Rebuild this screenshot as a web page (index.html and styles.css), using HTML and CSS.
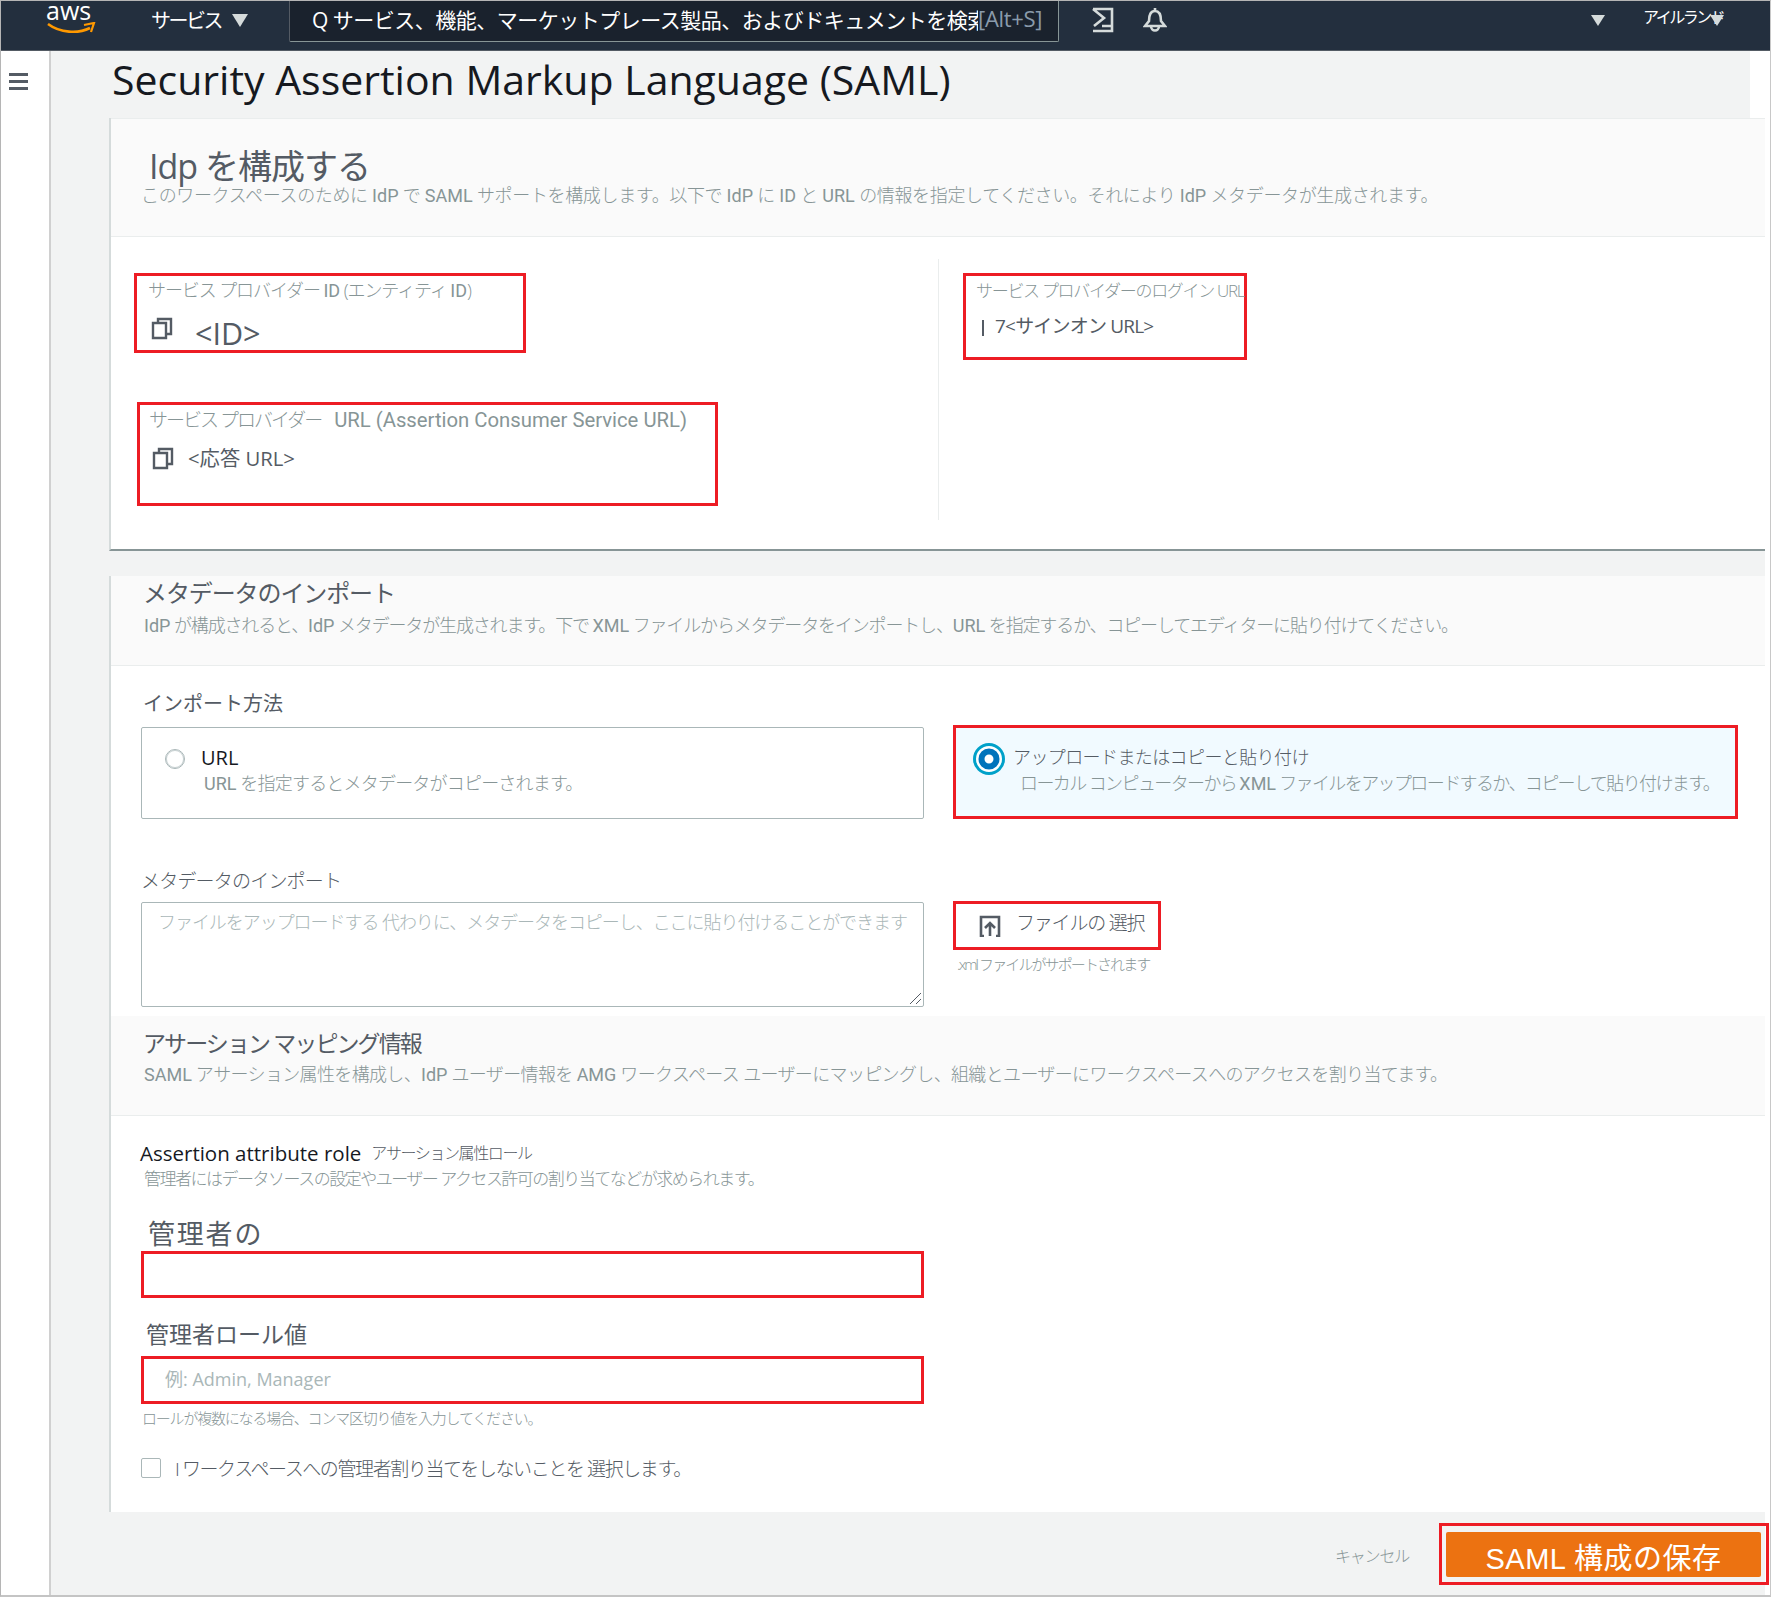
FILE: index.html
```html
<!DOCTYPE html>
<html lang="ja">
<head>
<meta charset="utf-8">
<title>SAML</title>
<link rel="stylesheet" href="styles.css">
</head>
<body>
<div class="page">
  <header class="topbar">
    <div class="logo">
      <span class="logo-text">aws</span>
      <svg class="logo-smile" width="50" height="14" viewBox="0 0 50 14"><path d="M2 2 C14 11 32 12 44 6" fill="none" stroke="#f90" stroke-width="2.6"/><path d="M38 3 L48 1 L45 10" fill="none" stroke="#f90" stroke-width="2.2"/></svg>
    </div>
    <span class="services">サービス</span>
    <span class="tri tri-services"></span>
    <div class="search"><span class="search-text">Q サービス、機能、マーケットプレース製品、およびドキュメントを検索</span><span class="search-key">[Alt+S]</span></div>
    <svg class="ico-term" width="24" height="26" viewBox="0 0 24 26"><path d="M2 2 H21 V24 H2 M2 2 L13 11 L3 19 M11 19 H21" fill="none" stroke="#d5dbdb" stroke-width="2.6"/></svg>
    <svg class="ico-bell" width="24" height="26" viewBox="0 0 24 26"><path d="M12 1 V4 M6 14 C6 7 8 4 12 4 C16 4 18 7 18 14 L22 19 H2 L6 14 Z M8 19 C8 25 16 25 16 19" fill="none" stroke="#d5dbdb" stroke-width="2.6"/></svg>
    <span class="tri tri-user"></span>
    <span class="region">アイルランド</span>
    <span class="tri tri-region"></span>
  </header>
  <div class="layout">
    <aside class="side"><div class="burger"><i></i><i></i><i></i></div></aside>
    <main class="main">
      <div class="title-band"><h1 class="page-title">Security Assertion Markup Language (SAML)</h1></div>

      <section class="card card-idp">
        <div class="head head-idp">
          <h2 class="h-idp">Idp を構成する</h2>
          <p class="sub sub-idp">このワークスペースのために <span class="lat">IdP</span> で <span class="lat">SAML</span> サポートを構成します。以下で <span class="lat">IdP</span> に <span class="lat">ID</span> と <span class="lat">URL</span> の情報を指定してください。それにより <span class="lat">IdP</span> メタデータが生成されます。</p>
        </div>
        <div class="idp-body">
          <div class="idp-left">
            <div class="red box-id">
              <div class="lbl">サービス プロバイダー <span class="lat">ID</span> (エンティティ <span class="lat">ID</span>)</div>
              <div class="val-row"><svg class="copy" width="22" height="23" viewBox="0 0 22 23"><path d="M7 5 V2 H20 V17 H15 M2 6 H15 V21 H2 Z" fill="none" stroke="#545b64" stroke-width="2.4"/></svg><span class="val-id">&lt;ID&gt;</span></div>
            </div>
            <div class="red box-url">
              <div class="lbl lbl-wide">サービス プロバイダー <span class="lat lat-wide">URL (Assertion Consumer Service URL)</span></div>
              <div class="val-row val-row2"><svg class="copy" width="22" height="23" viewBox="0 0 22 23"><path d="M7 5 V2 H20 V17 H15 M2 6 H15 V21 H2 Z" fill="none" stroke="#545b64" stroke-width="2.4"/></svg><span class="val-url">&lt;応答 URL&gt;</span></div>
            </div>
          </div>
          <div class="idp-right">
            <div class="red box-login">
              <div class="lbl lbl-small">サービス プロバイダーのログイン URL</div>
              <div class="val-row val-row3"><i class="cursor"></i><span class="val-login">7&lt;サインオン URL&gt;</span></div>
            </div>
          </div>
        </div>
      </section>

      <section class="card card-meta">
        <div class="head head-meta">
          <h2 class="h-meta">メタデータのインポート</h2>
          <p class="sub sub-meta"><span class="lat">IdP</span> が構成されると、<span class="lat">IdP</span> メタデータが生成されます。下で <span class="lat">XML</span> ファイルからメタデータをインポートし、<span class="lat">URL</span> を指定するか、コピーしてエディターに貼り付けてください。</p>
        </div>
        <div class="meta-body">
          <div class="lbl-method">インポート方法</div>
          <div class="options">
            <div class="option opt-url">
              <span class="radio"></span>
              <div class="opt-text">
                <div class="opt-title">URL</div>
                <div class="opt-desc"><span class="lat">URL</span> を指定するとメタデータがコピーされます。</div>
              </div>
            </div>
            <div class="option opt-upload">
              <svg class="radio-on" width="34" height="34" viewBox="0 0 34 34"><circle cx="17" cy="17" r="14.5" fill="#fff" stroke="#00a1c9" stroke-width="3"/><circle cx="17" cy="17" r="7.5" fill="none" stroke="#0073bb" stroke-width="6"/></svg>
              <div class="opt-text">
                <div class="opt-title opt-title-up">アップロードまたはコピーと貼り付け</div>
                <div class="opt-desc opt-desc-up">ローカル コンピューターから <span class="lat">XML</span> ファイルをアップロードするか、コピーして貼り付けます。</div>
              </div>
            </div>
          </div>
          <div class="import-row">
            <div class="import-left">
              <div class="lbl-import">メタデータのインポート</div>
              <div class="textarea"><span class="ph">ファイルをアップロードする 代わりに、メタデータをコピーし、ここに貼り付けることができます</span>
                <svg class="grip" width="14" height="14" viewBox="0 0 14 14"><path d="M2 13 L13 2 M8 13 L13 8" stroke="#545b64" stroke-width="1"/></svg>
              </div>
            </div>
            <div class="import-right">
              <div class="red file-btn">
                <svg width="22" height="22" viewBox="0 0 22 22"><path d="M5 21 H2 V2 H20 V21 H17 M11 21 V9 M6 13 L11 8 L16 13" fill="none" stroke="#545b64" stroke-width="2.6"/></svg>
                <span class="file-text">ファイルの 選択</span>
              </div>
              <div class="file-hint">.xml ファイルがサポートされます</div>
            </div>
          </div>
        </div>
        <div class="head head-map">
          <h2 class="h-map">アサーション マッピング情報</h2>
          <p class="sub sub-map"><span class="lat">SAML</span> アサーション属性を構成し、<span class="lat">IdP</span> ユーザー情報を <span class="lat">AMG</span> ワークスペース ユーザーにマッピングし、組織とユーザーにワークスペースへのアクセスを割り当てます。</p>
        </div>
        <div class="map-body">
          <div class="attr-row"><span class="attr-en">Assertion attribute role</span><span class="attr-ja">アサーション属性ロール</span></div>
          <div class="attr-desc">管理者にはデータソースの設定やユーザー アクセス許可の割り当てなどが求められます。</div>
          <div class="lbl-admin">管理者の</div>
          <div class="red field"></div>
          <div class="lbl-value">管理者ロール値</div>
          <div class="red field field-ph"><span class="ph-admin">例: Admin, Manager</span></div>
          <div class="help">ロールが複数になる場合、コンマ区切り値を入力してください。</div>
          <div class="check-row"><span class="check"></span><span class="check-text">I ワークスペースへの管理者割り当てをしないことを 選択します。</span></div>
        </div>
      </section>

      <footer class="footer">
        <span class="cancel">キャンセル</span>
        <div class="red save-wrap"><div class="save">SAML 構成の保存</div></div>
      </footer>
    </main>
  </div>
</div>
</body>
</html>
```

FILE: styles.css
```css
* { box-sizing: border-box; }
html, body { margin: 0; padding: 0; background: #fff; }
body { font-family: "Open Sans", "Noto Sans CJK JP", sans-serif; color: #16191f; }
h1, h2, p { margin: 0; font-weight: 400; }
.page { width: 1771px; height: 1597px; overflow: hidden; border-top: 1px solid #b5b5b5; border-left: 1px solid #b5b5b5; border-right: 1px solid #c8c8c8; border-bottom: 2px solid #c4c4c4; background: #fff; }
.lat { font-family: "Roboto", "Noto Sans CJK JP", sans-serif; font-weight: 400; letter-spacing: 0; }

/* top bar */
.topbar { height: 50px; background: #232f3e; border-bottom: 1px solid #545b64; display: flex; align-items: flex-start; color: #fff; }
.logo { width: 103px; height: 40px; padding-left: 45px; flex: none; }
.logo-text { display: block; font-size: 25px; line-height: 18px; color: #fff; }
.logo-smile { display: block; margin-top: 3px; }
.services { font-size: 20px; letter-spacing: -2.5px; line-height: 40px; margin-left: 47px; width: 81px; flex: none; color: #fff; white-space: nowrap; }
.tri { width: 0; height: 0; border-left: 8px solid transparent; border-right: 8px solid transparent; border-top: 13px solid #d5dbdb; flex: none; }
.tri-services { margin-top: 13px; }
.search { width: 770px; height: 41px; margin-left: 41px; background: #1a222d; border-right: 1px solid #879596; border-bottom: 1px solid #879596; border-left: 1px solid #545b64; border-radius: 0 0 2px 2px; display: flex; padding-left: 22px; flex: none; overflow: hidden; }
.search-text { width: 666px; flex: none; font-size: 21px; letter-spacing: -0.5px; line-height: 38px; white-space: nowrap; overflow: hidden; color: #fff; }
.search-key { font-size: 22px; letter-spacing: -0.3px; line-height: 34px; color: #8a9bab; white-space: nowrap; }
.ico-term { margin: 6px 0 0 32px; flex: none; }
.ico-bell { margin: 6px 0 0 28px; flex: none; }
.tri-user { margin: 14px 0 0 424px; border-left-width: 7px; border-right-width: 7px; border-top-width: 11px; }
.region { font-size: 16px; letter-spacing: -2.5px; line-height: 32px; margin-left: 38px; width: 67px; white-space: nowrap; flex: none; }
.tri-region { margin: 14px 0 0 0; border-left-width: 7px; border-right-width: 7px; border-top-width: 11px; }

/* layout */
.layout { display: flex; height: 1544px; }
.side { width: 50px; flex: none; background: #fff; border-right: 2px solid #d0d0d0; padding: 22px 0 0 8px; }
.burger i { display: block; width: 19px; height: 3px; background: #545b64; margin-bottom: 4px; }
.main { width: 1714px; flex: none; background: #f2f3f3; padding-left: 59px; }
.title-band { height: 67px; margin-left: -59px; padding-left: 59px; border-right: 15px solid #fff; }
.page-title { font-size: 41px; line-height: 56px; color: #16191f; white-space: nowrap; margin-left: 2px; }

/* cards */
.card { background: #fff; border-left: 2px solid #d5dbdb; margin-left: -1px; }
.card-idp { height: 433px; border-bottom: 2px solid #879596; }
.head { background: #fafafa; border-bottom: 1px solid #eaeded; }
.head-idp { height: 119px; padding: 27px 0 0 15px; border-top: 1px solid #eaeded; }
.h-idp { font-size: 34px; letter-spacing: -1px; line-height: 40px; color: #545b64; padding-left: 23px; }
.sub { font-size: 18px; line-height: 26px; color: #879596; white-space: nowrap; font-weight: 300; }
.sub-idp { margin-top: -4px; padding-left: 15px; letter-spacing: -0.35px; }

.idp-body { display: flex; height: 312px; }
.idp-left { width: 828px; padding: 14px 0 0 23px; border-right: 1px solid #eaeded; height: 261px; margin-top: 22px; }
.idp-right { padding: 14px 0 0 24px; margin-top: 22px; }
.red { border: 3px solid #ed1c24; }
.box-id { width: 392px; height: 80px; padding: 1px 0 0 11px; }
.box-url { width: 581px; height: 104px; margin: 49px 0 0 3px; padding: 2px 0 0 9px; }
.box-login { width: 284px; height: 87px; padding: 2px 0 0 10px; }
.lbl { font-size: 18px; letter-spacing: -1.1px; line-height: 26px; color: #879596; white-space: nowrap; font-weight: 300; }
.lbl-wide { letter-spacing: -2px; font-size: 19px; }
.lat-wide { font-size: 20.3px; margin-left: 10px; }
.lbl-small { font-size: 17px; letter-spacing: -1.3px; }
.val-row { display: flex; align-items: flex-start; margin-top: 10px; }
.val-id { font-size: 30.5px; line-height: 34px; color: #545b64; margin: 2px 0 0 22px; }
.val-url { font-size: 20.3px; line-height: 30px; color: #545b64; margin-left: 14px; }
.val-login { font-size: 19px; letter-spacing: -0.8px; line-height: 30px; color: #545b64; }
.val-row2 { margin-top: 11px; }
.val-row2 .val-url { margin-top: -1px; }
.val-row3 { margin-top: 7px; padding-left: 3px; }
.cursor { display: block; width: 2px; height: 16px; background: #545b64; margin: 9px 11px 0 3px; }
.copy { flex: none; margin: 3px 0 0 3px; }

/* metadata */
.card-meta { margin-top: 25px; height: 936px; }
.head-meta { height: 90px; padding: 0 0 0 32px; }
.h-meta { font-size: 24px; letter-spacing: -1.1px; line-height: 34px; color: #545b64; }
.sub-meta { margin-top: 2px; padding-left: 1px; letter-spacing: -1.15px; }
.meta-body { height: 350px; padding: 23px 0 0 30px; }
.lbl-method { font-size: 20px; line-height: 30px; color: #545b64; padding-left: 2px; }
.options { display: flex; margin-top: 8px; }
.option { display: flex; height: 92px; }
.opt-url { width: 783px; border: 1px solid #aab7b8; border-radius: 2px; padding: 17px 0 0 23px; }
.radio { width: 20px; height: 20px; border: 1px solid #aab7b8; border-radius: 50%; margin: 4px 16px 0 0; flex: none; background: #fff; box-shadow: inset 0 0 0 1px #c9d2d3; }
.opt-upload { width: 785px; height: 94px; margin-left: 29px; margin-top: -2px; border: 3px solid #ed1c24; background: #f1faff; padding: 14px 0 0 16px; }
.radio-on { flex: none; margin-right: 7px; }
.opt-upload .opt-text { padding-top: 3px; }
.opt-title { font-size: 20px; line-height: 25px; color: #16191f; }
.opt-title-up { color: #545b64; font-weight: 300; font-size: 18px; letter-spacing: -0.6px; }
.opt-desc { font-size: 18px; letter-spacing: -0.8px; line-height: 26px; color: #879596; font-weight: 300; white-space: nowrap; padding-left: 3px; }
.opt-desc-up { padding-left: 7px; letter-spacing: -1.6px; }
.import-row { display: flex; margin-top: 48px; }
.import-left { width: 783px; flex: none; }
.lbl-import { font-size: 19px; line-height: 28px; letter-spacing: -0.8px; color: #545b64; font-weight: 300; }
.textarea { height: 105px; margin-top: 7px; border: 1px solid #aab7b8; border-radius: 2px; padding: 5px 0 0 16px; position: relative; }
.ph { font-size: 18px; letter-spacing: -1.05px; line-height: 28px; color: #aab7b8; font-weight: 300; white-space: nowrap; }
.grip { position: absolute; right: 1px; bottom: 1px; }
.import-right { margin: 34px 0 0 29px; }
.file-btn { width: 208px; height: 49px; display: flex; align-items: center; padding-left: 23px; }
.file-text { font-size: 19px; letter-spacing: -1.2px; color: #545b64; font-weight: 300; margin: -5px 0 0 15px; line-height: 30px; white-space: nowrap; }
.file-hint { font-size: 15px; letter-spacing: -1.9px; line-height: 24px; color: #879596; font-weight: 300; margin-top: 2px; padding-left: 4px; white-space: nowrap; }

.head-map { height: 100px; padding: 10px 0 0 32px; }
.h-map { font-size: 23px; letter-spacing: -1.9px; line-height: 34px; color: #545b64; }
.sub-map { margin-top: 1px; padding-left: 1px; letter-spacing: -0.65px; }
.map-body { padding: 21px 0 0 30px; }
.attr-row { display: flex; align-items: center; height: 30px; margin: 1px 0 0 -1px; }
.attr-en { font-size: 20.5px; color: #16191f; }
.attr-ja { font-size: 16px; letter-spacing: -1.4px; color: #545b64; font-weight: 300; margin: -3px 0 0 10px; }
.attr-desc { font-size: 17px; letter-spacing: -1.5px; line-height: 24px; color: #879596; font-weight: 300; padding-left: 3px; margin-top: -1px; }
.lbl-admin { font-size: 27px; letter-spacing: 1.8px; line-height: 35px; color: #545b64; padding-left: 7px; margin-top: 25px; }
.field { width: 783px; height: 47px; }
.lbl-value { font-size: 23px; line-height: 34px; color: #545b64; padding-left: 5px; margin-top: 19px; }
.field-ph { margin-top: 5px; height: 48px; padding: 7px 0 0 21px; }
.ph-admin { font-size: 18px; line-height: 26px; color: #aab7b8; }
.help { font-size: 15px; letter-spacing: -1.2px; line-height: 24px; color: #879596; font-weight: 300; padding-left: 1px; margin-top: 2px; }
.check-row { display: flex; align-items: center; margin-top: 24px; height: 28px; }
.check { width: 20px; height: 20px; border: 1px solid #aab7b8; border-radius: 2px; background: #fff; flex: none; }
.check-text { font-size: 19px; letter-spacing: -1.4px; color: #545b64; margin-left: 14px; font-weight: 300; }

/* footer */
.footer { display: flex; align-items: flex-start; height: 80px; background: #f2f3f3; }
.cancel { font-size: 16px; letter-spacing: -1.2px; line-height: 28px; color: #879596; margin: 30px 0 0 1225px; width: 104px; flex: none; font-weight: 300; }
.save-wrap { width: 330px; height: 62px; padding: 6px 5px 0 4px; margin-top: 11px; flex: none; }
.save { height: 45px; background: #ec7211; border-radius: 2px; color: #fff; font-size: 29px; letter-spacing: 0.5px; line-height: 54px; text-align: center; overflow: hidden; font-family: "Liberation Sans", "Noto Sans CJK JP", sans-serif; }
```
